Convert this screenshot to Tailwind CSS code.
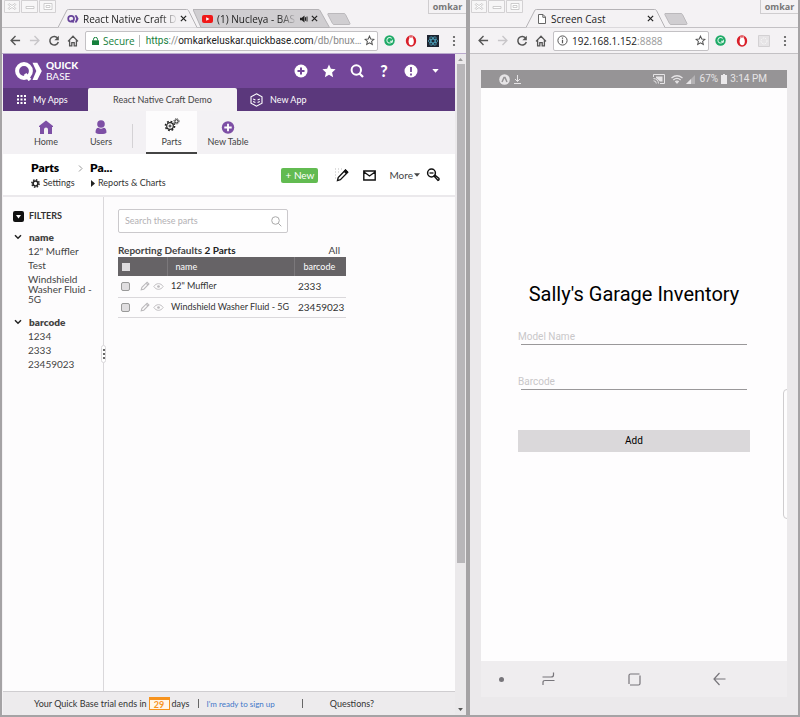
<!DOCTYPE html>
<html lang="en">
<head>
<meta charset="utf-8">
<meta name="viewport" content="width=device-width, initial-scale=1">
<title>React Native Craft Demo</title>
<script src="https://cdn.jsdelivr.net/npm/@tailwindcss/browser@4"></script>
</head>
<body class="bg-[#ecebec]">
<svg class="hidden" aria-hidden="true">
  <symbol id="back" viewBox="0 0 12 12"><path d="M11 6H1.500M6 1.200 1.200 6 6 10.800" fill="none" stroke="currentColor" stroke-width="1.500"/></symbol>
  <symbol id="forward" viewBox="0 0 12 12"><path d="M1 6h9.500M6 1.200 10.800 6 6 10.800" fill="none" stroke="currentColor" stroke-width="1.500"/></symbol>
  <symbol id="reload" viewBox="0 0 12 12"><path d="M9.800 3.400A4.300 4.300 0 1 0 10.300 7" fill="none" stroke="currentColor" stroke-width="1.500"/><path d="M10.800.8v4.400H6.400z" fill="currentColor"/></symbol>
  <symbol id="home" viewBox="0 0 12 12"><path d="M1 6.400 6 1.200l5 5.200M2.600 5.200v5.600h2.200V7.600h2.400v3.200h2.200V5.200" fill="none" stroke="currentColor" stroke-width="1.300"/></symbol>
  <symbol id="star" viewBox="0 0 12 12"><path d="m6 1.200 1.400 3.200 3.500.3-2.600 2.300.8 3.400L6 8.600l-3.100 1.800.8-3.400L1.100 4.700l3.500-.3z" fill="none" stroke="currentColor" stroke-width="1.100"/></symbol>
  <symbol id="close" viewBox="0 0 8 8"><path d="m1 1 6 6M7 1 1 7" stroke="currentColor" stroke-width="1.400"/></symbol>
  <symbol id="grammar" viewBox="0 0 12 12"><circle cx="6" cy="6" r="5.700" fill="#1faa67"/><path d="M8.400 3.800A3 3 0 1 0 9 6.800H6.500M9.200 5.200v3" fill="none" stroke="#d9f5e7" stroke-width="1.100"/></symbol>
  <symbol id="opera" viewBox="0 0 12 12"><ellipse cx="6" cy="6" rx="5.200" ry="5.700" fill="#d9202a"/><ellipse cx="6.200" cy="6.300" rx="2.600" ry="3.900" fill="#fff"/><path d="M4.500 1.500v2M6 .8v2M7.600 1.200v2" stroke="#fff" stroke-width=".6"/></symbol>
  <symbol id="dots" viewBox="0 0 4 12"><circle cx="2" cy="2" r="1.100" fill="currentColor"/><circle cx="2" cy="6" r="1.100" fill="currentColor"/><circle cx="2" cy="10" r="1.100" fill="currentColor"/></symbol>
  <symbol id="controls" viewBox="0 0 52 13"><g fill="#f7f6f7" stroke="#d3d1d3"><path d="M.5.5h15v12H.5zM17.500.5h16v12h-16zM35.500.5h16v12h-16z"/></g><g fill="#fff" stroke="#c3c1c3" stroke-width=".8"><path d="m5 3.500 3 2 3-2 1 1-2.500 2 2.500 2-1 1-3-2-3 2-1-1 2.500-2-2.500-2zM22 6.500h8v2h-8zM40 3.500h8v6h-8zM42 5.500h4v2h-4z"/></g></symbol>
  <symbol id="caret" viewBox="0 0 8 5"><path d="M0 0h8L4 4.800z" fill="currentColor"/></symbol>
  <symbol id="qb" viewBox="0 0 27 19"><circle cx="9" cy="9" r="6.900" fill="none" stroke="currentColor" stroke-width="4"/><path d="m10 12 5 6" stroke="currentColor" stroke-width="3.500"/><path d="M17.500.8h4.800L26.800 9l-4.500 9h-4.800l3.800-9z" fill="currentColor"/></symbol>
  <symbol id="pencil" viewBox="0 0 12 12"><path d="m1.500 10.500.8-3L8.500 1.400l2.200 2.200L4.500 9.800zM7.300 2.600l2.200 2.200" fill="none" stroke="currentColor" stroke-width="1.300"/></symbol>
  <symbol id="eye" viewBox="0 0 12 10"><path d="M.8 5C3.500.8 8.500.8 11.200 5 8.500 9.200 3.500 9.200.8 5z" fill="none" stroke="currentColor"/><circle cx="6" cy="5" r="1.500" fill="currentColor"/></symbol>
  <symbol id="chevron" viewBox="0 0 8 6"><path d="m1 1.200 3 3 3-3" fill="none" stroke="currentColor" stroke-width="1.500"/></symbol>
</svg>

<div class="grid min-h-screen grid-cols-[468fr_332fr] font-['Lato','Open_Sans',sans-serif] text-[10px] leading-3 text-[#444]">

  <!-- Quick Base window -->
  <section class="flex min-w-0 flex-col border-r-2 border-b-2 border-l-2 border-[#a5a3a5] bg-[#f4f2f4]" aria-label="Quick Base browser window">
    <div class="flex h-7 border-b border-[#c3c1c4] font-['Open_Sans','Noto_Sans',sans-serif] text-[10px] text-[#222]">
      <svg class="ml-[2px] h-[13px] w-[52px] shrink-0"><use href="#controls"/></svg>
      <div class="relative z-10 -mb-px mt-[9px] ml-[2px] flex h-[19px] w-[140px] shrink-0 items-center pl-[9px]">
        <svg class="absolute inset-0 -z-10 h-full w-full" viewBox="0 0 140 19" preserveAspectRatio="none"><path d="M0 18.500 9 1q.5-.5 1.500-.5h118q1.500 0 2 1l8.500 17" fill="#f4f2f4" stroke="#b5b3b6"/></svg>
        <svg class="h-2 w-3 text-[#67439a]"><use href="#qb"/></svg>
        <span class="ml-1 w-[95px] whitespace-nowrap [mask-image:linear-gradient(to_right,black_82%,transparent)]">React Native Craft D</span>
        <button class="ml-[2px]" aria-label="Close tab"><svg class="h-[7px] w-[7px]"><use href="#close"/></svg></button>
      </div>
      <div class="relative -mb-px mt-[9px] -ml-[5px] flex h-[19px] w-[138px] shrink-0 items-center pl-[9px]">
        <svg class="absolute inset-0 h-full w-full" viewBox="0 0 138 19" preserveAspectRatio="none"><path d="M0 .5h125q1.500 0 2 1l9.500 17H8z" fill="#d0ced1" stroke="#b5b3b6"/></svg>
        <svg class="relative h-2 w-[11px]" viewBox="0 0 11 8"><rect width="11" height="8" rx="2" fill="#f01818"/><path d="M4.200 2.200v3.600L7.500 4z" fill="#fff"/></svg>
        <span class="relative ml-[4px] w-[80px] whitespace-nowrap [mask-image:linear-gradient(to_right,black_78%,transparent)]">(1) Nucleya - BAS</span>
        <svg class="relative ml-[3px] h-2 w-2" viewBox="0 0 8 8"><path d="M0 2.700h1.800L4.500.5v7L1.800 5.300H0z" fill="#222"/><path d="M5.500 2.200v3.600M7 1.500v5" stroke="#222"/></svg>
        <button class="relative ml-[3px]" aria-label="Close tab"><svg class="h-[7px] w-[7px]"><use href="#close"/></svg></button>
      </div>
      <button class="mt-[13px] -ml-1 h-3 shrink-0" aria-label="New tab"><svg class="h-3 w-6" viewBox="0 0 24 12"><path d="M1 .5h16q1 0 1.500 1l4.500 9q.2 1-1 1H7q-1 0-1.500-1L.8 1.500z" fill="#d0ced1" stroke="#bbb9bc"/></svg></button>
      <span class="ml-auto flex h-[14px] w-[38px] shrink-0 items-center justify-center border-b border-l border-[#cfcdcf] text-[9px] leading-3 font-bold text-[#777]">omkar</span>
    </div>
    <div class="flex h-[26px] items-center border-b border-[#b9a9cc] pl-2 font-['Open_Sans','Noto_Sans',sans-serif] text-[#555]">
      <button aria-label="Back"><svg class="h-[11px] w-[11px]"><use href="#back"/></svg></button>
      <button class="ml-2 text-[#c8c6c9]" aria-label="Forward"><svg class="h-[11px] w-[11px]"><use href="#forward"/></svg></button>
      <button class="ml-2" aria-label="Reload"><svg class="h-3 w-3"><use href="#reload"/></svg></button>
      <button class="ml-[7px]" aria-label="Home page"><svg class="h-3 w-3"><use href="#home"/></svg></button>
      <div class="ml-[6px] flex h-5 min-w-0 flex-1 items-center rounded-xs border border-[#c3c1c4] bg-white pr-[2px] pl-[6px]">
        <svg class="h-2 w-[7px] shrink-0" viewBox="0 0 7 8"><path d="M0 3.300h7V8H0z" fill="#16803c"/><path d="M1.500 3.500V2.300a2 2 0 0 1 4 0v1.200" fill="none" stroke="#16803c"/></svg>
        <span class="ml-[4px] shrink-0 text-[#16803c]">Secure</span>
        <span class="mr-[6px] ml-1 h-3 w-px shrink-0 bg-[#bbb]"></span>
        <span class="flex-1 font-['Roboto',sans-serif] whitespace-nowrap text-[#888]"><span class="text-[#16803c]">https</span>://<span class="text-[#222]">omkarkeluskar.quickbase.com</span>/db/bnux…</span>
        <button class="shrink-0" aria-label="Bookmark"><svg class="h-[11px] w-[11px]"><use href="#star"/></svg></button>
      </div>
      <button class="ml-[6px] shrink-0" aria-label="Grammar checker"><svg class="h-[11px] w-[11px]"><use href="#grammar"/></svg></button>
      <button class="ml-[10px] shrink-0" aria-label="Ad blocker"><svg class="h-3 w-3"><use href="#opera"/></svg></button>
      <button class="ml-[10px] shrink-0" aria-label="React tools"><svg class="h-3 w-3" viewBox="0 0 12 12"><path d="M0 0h12v12H0z" fill="#1d2430"/><g fill="none" stroke="#4ea3bd" stroke-width=".8"><ellipse cx="6" cy="6" rx="4.800" ry="1.900"/><ellipse cx="6" cy="6" rx="4.800" ry="1.900" transform="rotate(60 6 6)"/><ellipse cx="6" cy="6" rx="4.800" ry="1.900" transform="rotate(120 6 6)"/></g></svg></button>
      <button class="mr-[10px] ml-[13px] shrink-0" aria-label="Menu"><svg class="h-3 w-1"><use href="#dots"/></svg></button>
    </div>

    <div class="flex flex-1">
      <div class="ml-px flex min-w-0 flex-1 flex-col bg-[#fdfcfd]">
        <header class="flex h-[34px] items-center bg-[#734699] pr-4 pl-3 text-white">
          <svg class="h-[19px] w-[27px]"><use href="#qb"/></svg>
          <div class="ml-1 flex flex-col text-[10px] leading-[11px]"><b class="font-black">QUICK</b><span>BASE</span></div>
          <div class="ml-auto flex items-center gap-[14px]">
            <button aria-label="Add"><svg class="h-[14px] w-[14px]" viewBox="0 0 14 14"><circle cx="7" cy="7" r="6.500" fill="#fff"/><path d="M7 3.500v7M3.500 7h7" stroke="#734699" stroke-width="2"/></svg></button>
            <button aria-label="Favorites"><svg class="h-[14px] w-[14px]" viewBox="0 0 14 14"><path d="m7 .5 1.900 4.300 4.700.5-3.500 3.200 1 4.700L7 10.800l-4.100 2.400 1-4.700L.4 5.300l4.700-.5z" fill="#fff"/></svg></button>
            <button aria-label="Search"><svg class="h-[14px] w-[14px]" viewBox="0 0 14 14"><circle cx="6.300" cy="6" r="4.700" fill="none" stroke="#fff" stroke-width="2"/><path d="m9.500 9.500 3.500 3.500" stroke="#fff" stroke-width="2.300"/></svg></button>
            <button class="w-[12px] text-center text-base leading-[14px] font-black" aria-label="Help">?</button>
            <button aria-label="Alerts"><svg class="h-[14px] w-[14px]" viewBox="0 0 14 14"><circle cx="7" cy="7" r="6.500" fill="#fff"/><path d="M7 3v5M7 9.500v2" stroke="#734699" stroke-width="1.800"/></svg></button>
            <button aria-label="Account"><svg class="h-[4px] w-[7px]"><use href="#caret"/></svg></button>
          </div>
        </header>
        <nav class="flex h-[23px] bg-[#5b387c] text-[9px] text-white" aria-label="Apps">
          <a href="#" class="flex w-[85px] items-center pl-[14px]"><svg class="mr-[7px] h-[9px] w-[9px]" viewBox="0 0 9 9"><path d="M1 0v9M4.500 0v9M8 0v9" stroke="#fff" stroke-width="2" stroke-dasharray="2 1.500"/></svg>My Apps</a>
          <a href="#" class="flex w-[149px] items-center justify-center rounded-t-xs bg-[#f4f2f4] text-[#444]">React Native Craft Demo</a>
          <a href="#" class="flex items-center pl-[13px]"><svg class="mr-[7px] h-[14px] w-[13px]" viewBox="0 0 13 14"><path d="m6.500.8 5.500 3v6.400l-5.500 3-5.500-3V3.800zM3.200 6l2.200 1M9.800 6 7.600 7M3.200 8.500l2.200 1M9.800 8.500l-2.200 1" fill="none" stroke="#fff" stroke-width="1.100"/></svg>New App</a>
        </nav>
        <nav class="flex h-[43px] bg-[#f3f1f4] pl-[15px] text-[9px] leading-3" aria-label="Tables">
          <a href="#" class="flex w-[56px] flex-col items-center pt-[9px]"><svg class="mb-[2px] h-[14px] w-[14px]" viewBox="0 0 14 14"><path d="M0 6 7 .5 14 6v1h-1v7H9V9.500a2 2 0 0 0-4 0V14H1V7H0z" fill="#7d4fa5"/></svg>Home</a>
          <a href="#" class="flex w-[54px] flex-col items-center pt-[9px]"><svg class="mb-[2px] h-[14px] w-[14px]" viewBox="0 0 14 14"><circle cx="7" cy="4" r="3.800" fill="#7d4fa5"/><path d="M1.500 12.500q0-4.500 3-4.700Q7 9.500 9.500 7.800q3 .2 3 4.700-1 1.500-5.500 1.500t-5.500-1.500z" fill="#7d4fa5"/></svg>Users</a>
          <span class="mt-[13px] ml-1 h-6 w-px bg-[#d4d2d5]"></span>
          <a href="#" class="ml-[13px] flex w-[51px] flex-col items-center border-b-2 border-[#444] bg-[#fdfcfd] pt-[7px]"><svg class="mb-1 h-[14px] w-4" viewBox="0 0 16 14"><g fill="none" stroke="#222"><circle cx="6" cy="8" r="3.300" stroke-width="1.200"/><circle cx="6" cy="8" r="4.600" stroke-width="1.500" stroke-dasharray="1.800 1.810"/><circle cx="6" cy="8" r="1"/><circle cx="12.500" cy="3.300" r="1.600"/><circle cx="12.500" cy="3.300" r="2.600" stroke-dasharray="1 1.040"/></g></svg>Parts</a>
          <a href="#" class="ml-1 flex w-[54px] flex-col items-center pt-[10px] whitespace-nowrap"><svg class="mb-[2px] h-[13px] w-[14px]" viewBox="0 0 14 14"><circle cx="7" cy="7" r="6.700" fill="#7d4fa5"/><path d="M7 3v8M3 7h8" stroke="#fff" stroke-width="2"/></svg>New Table</a>
        </nav>
        <div class="flex h-[43px] items-center border-b-2 border-[#ebe9ec] bg-white pt-px pr-[15px] pl-7">
          <div class="grid grid-cols-[59px_auto] gap-y-[2px] text-[9px] leading-3 text-[#333]">
            <h1 class="flex items-center justify-between text-xs leading-[14px] font-extrabold text-black">Parts<svg class="mr-[7px] h-[7px] w-[5px]" viewBox="0 0 5 7"><path d="m1 .5 3 3-3 3" fill="none" stroke="#999"/></svg></h1>
            <h2 class="text-xs leading-[14px] font-extrabold text-black">Pa...</h2>
            <a href="#" class="flex items-center"><svg class="mr-[3px] h-[9px] w-[9px]" viewBox="0 0 9 9"><circle cx="4.500" cy="4.500" r="2.500" fill="none" stroke="#222" stroke-width="1.700"/><circle cx="4.500" cy="4.500" r="3.700" fill="none" stroke="#222" stroke-width="1.400" stroke-dasharray="1.500 1.400"/></svg>Settings</a>
            <a href="#" class="flex items-center"><svg class="mr-[3px] ml-px h-[7px] w-1" viewBox="0 0 4 7"><path d="M0 0v7l4-3.500z" fill="#222"/></svg>Reports &amp; Charts</a>
          </div>
          <button class="ml-auto h-[15px] w-[37px] rounded-xs bg-[#62bb51] text-white">+ New</button>
          <button class="ml-4" aria-label="Edit"><svg class="h-[14px] w-[15px] text-black" viewBox="0 0 15 14"><path d="M1 1h7M1 4h5M1 7h3M1 10h2" stroke="#bbb" stroke-dasharray="1 2"/><path d="m3.500 12.500.7-3L11.500 2l2.200 2.200-7.300 7.400z" fill="#fff" stroke="#111" stroke-width="1.300"/><path d="m9.500 3.500 2-2.200 2.800 2.600-2.100 2.300z" fill="#111"/></svg></button>
          <button class="ml-[14px]" aria-label="Email"><svg class="h-[11px] w-[13px]" viewBox="0 0 13 11"><path d="M.8 1h11.400v9H.8zM1 2l5.500 4L12 2" fill="none" stroke="#111" stroke-width="1.400"/></svg></button>
          <button class="ml-[13px] flex items-center">More<svg class="ml-px h-1 w-[6px]"><use href="#caret"/></svg></button>
          <button class="ml-[6px]" aria-label="Search tools"><svg class="h-[14px] w-[14px]" viewBox="0 0 14 14"><circle cx="5.500" cy="5" r="3.900" fill="none" stroke="#111" stroke-width="1.500"/><path d="M3.500 5h4" stroke="#111" stroke-width="1.300"/><path d="m8 8 1-.8 4 3.300q.5 1.500-1 2z" fill="#fff" stroke="#111" stroke-width="1.300"/></svg></button>
        </div>

        <div class="flex flex-1">
          <aside class="relative w-[101px] shrink-0 border-r border-[#dad8db] pt-[13px] pl-[10px]">
            <div class="flex items-center text-[9px] font-bold text-[#333]"><svg class="mr-[5px] h-[11px] w-[11px]" viewBox="0 0 11 11"><rect width="11" height="11" rx="2" fill="#111"/><path d="M3 4h5L5.500 7.500z" fill="#fff"/></svg>FILTERS</div>
            <h3 class="mt-[9px] flex items-center gap-[7px] pl-px text-[10px] leading-3 font-extrabold"><svg class="h-[6px] w-2 text-[#222]"><use href="#chevron"/></svg>name</h3>
            <ul class="ml-[15px] flex flex-col gap-1 pt-[3px] pr-2 leading-[10px]"><li>12" Muffler</li><li>Test</li><li>Windshield Washer Fluid - 5G</li></ul>
            <h3 class="mt-[12px] flex items-center gap-[7px] pl-px text-[10px] leading-3 font-extrabold"><svg class="h-[6px] w-2 text-[#222]"><use href="#chevron"/></svg>barcode</h3>
            <ul class="ml-[15px] flex flex-col gap-1 pt-[3px] leading-[10px]"><li>1234</li><li>2333</li><li>23459023</li></ul>
            <div class="absolute top-[148px] -right-[3px] flex h-[18px] w-[5px] items-center justify-center rounded-full border border-[#dad8db] bg-white text-[#444]"><svg class="h-3 w-1 shrink-0"><use href="#dots"/></svg></div>
          </aside>
          <main class="min-w-0 flex-1 pt-3 pl-[14px]">
            <div class="flex h-[24px] w-[170px] items-center rounded-xs border border-[#cbc9cc] bg-white pr-[5px] pl-[6px]">
              <input type="search" aria-label="Search these parts" placeholder="Search these parts" class="min-w-0 flex-1 text-[9px] placeholder:text-[#b3b1b4] focus:outline-none">
              <svg class="h-[11px] w-[11px]" viewBox="0 0 11 11"><circle cx="4.500" cy="4.500" r="3.800" fill="none" stroke="#aaa"/><path d="m7.300 7.300 3 3" stroke="#aaa"/></svg>
            </div>
            <div class="w-[228px]">
              <div class="mt-[10px] flex h-[14px] items-center justify-between pr-[6px]"><b class="font-bold">Reporting Defaults <span class="text-[#222]">2 Parts</span></b><span>All</span></div>
              <table class="w-full table-fixed border-collapse text-left text-[9px] text-[#333]">
                <thead><tr class="h-[19px] bg-[#666366] text-white">
                  <th class="w-[49px] border-r border-[#7b787b] pl-1"><input type="checkbox" aria-label="Select all" class="block h-2 w-2 appearance-none bg-[#dedcde]"></th>
                  <th class="w-[127px] border-r border-[#7b787b] pl-2 font-normal">name</th>
                  <th class="pl-[9px] font-normal">barcode</th></tr></thead>
                <tbody>
                  <tr class="h-[21px] border-b border-[#dad8db]"><td><div class="flex items-center pl-[3px] text-[#bbb9bc]"><input type="checkbox" aria-label="Select 12&quot; Muffler" class="h-[9px] w-[9px] appearance-none rounded-xs border border-[#999] bg-[#e0dee0]"><svg class="ml-[10px] h-[10px] w-[10px]"><use href="#pencil"/></svg><svg class="ml-[3px] h-[9px] w-[11px]"><use href="#eye"/></svg></div></td><td class="pl-1">12" Muffler</td><td class="pl-1 text-[10px]">2333</td></tr>
                  <tr class="h-[20px] border-b border-[#dad8db]"><td><div class="flex items-center pl-[3px] text-[#bbb9bc]"><input type="checkbox" aria-label="Select Windshield Washer Fluid" class="h-[9px] w-[9px] appearance-none rounded-xs border border-[#999] bg-[#e0dee0]"><svg class="ml-[10px] h-[10px] w-[10px]"><use href="#pencil"/></svg><svg class="ml-[3px] h-[9px] w-[11px]"><use href="#eye"/></svg></div></td><td class="pl-1 whitespace-nowrap">Windshield Washer Fluid - 5G</td><td class="pl-1 text-[10px]">23459023</td></tr>
                </tbody>
              </table>
            </div>
          </main>
        </div>
        <footer class="flex h-6 items-center border-t border-[#cfcdd0] bg-[#edebed] pl-[31px] text-[9px] whitespace-nowrap text-[#333]">
          Your Quick Base trial ends in<span class="mx-[2px] h-[13px] w-[21px] border border-t-3 border-[#f7931e] bg-[#fff6ea] text-center leading-[9px] font-bold text-[#f7931e]">29</span>days
          <span class="ml-[9px] h-[9px] w-px bg-[#666]"></span><a href="#" class="ml-[7px] text-[8px] text-[#3f77c9]">I'm ready to sign up</a><span class="ml-[27px] h-[9px] w-px bg-[#666]"></span><a href="#" class="ml-[27px]">Questions?</a>
        </footer>
      </div>
      <div class="flex w-[11px] flex-col items-center bg-[#ebe9eb] pt-[4px] pb-[4px] text-[#555]" aria-hidden="true">
        <svg class="h-[3px] w-[5px] shrink-0 rotate-180 text-[#999]"><use href="#caret"/></svg>
        <div class="mt-[3px] w-[8px] flex-[496] bg-[#b8b6b9]"></div><div class="flex-[144]"></div>
        <svg class="h-[3px] w-[5px] shrink-0"><use href="#caret"/></svg>
      </div>
    </div>
  </section>

  <!-- Screen Cast window -->
  <section class="flex min-w-0 flex-col border-r-2 border-b-2 border-l-2 border-[#a5a3a5] bg-[#f4f2f4]" aria-label="Screen Cast browser window">
    <div class="flex h-7 border-b border-[#c3c1c4] font-['Open_Sans','Noto_Sans',sans-serif] text-[10px] text-[#222]">
      <svg class="ml-px h-[13px] w-[52px] shrink-0"><use href="#controls"/></svg>
      <div class="relative z-10 -mb-px mt-[9px] ml-[3px] flex h-[19px] w-[140px] shrink-0 items-center pl-3">
        <svg class="absolute inset-0 -z-10 h-full w-full" viewBox="0 0 140 19" preserveAspectRatio="none"><path d="M0 18.500 9 1q.5-.5 1.500-.5h118q1.500 0 2 1l8.500 17" fill="#f4f2f4" stroke="#b5b3b6"/></svg>
        <svg class="h-[10px] w-2" viewBox="0 0 8 10"><path d="M.5.5H5l2.500 2.500v6.500h-7zM4.800.5V3.300h2.700" fill="#fff" stroke="#666"/></svg>
        <span class="ml-[5px]">Screen Cast</span>
        <button class="mr-[12px] ml-auto" aria-label="Close tab"><svg class="h-[7px] w-[7px]"><use href="#close"/></svg></button>
      </div>
      <button class="mt-[13px] -ml-[2px] h-3 shrink-0" aria-label="New tab"><svg class="h-3 w-6" viewBox="0 0 24 12"><path d="M1 .5h16q1 0 1.500 1l4.500 9q.2 1-1 1H7q-1 0-1.500-1L.8 1.500z" fill="#d0ced1" stroke="#bbb9bc"/></svg></button>
      <span class="ml-auto flex h-[14px] w-[38px] shrink-0 items-center justify-center border-b border-l border-[#cfcdcf] text-[9px] leading-3 font-bold text-[#777]">omkar</span>
    </div>
    <div class="flex h-[26px] items-center border-b border-[#c3c1c4] pl-2 font-['Open_Sans','Noto_Sans',sans-serif] text-[#555]">
      <button aria-label="Back"><svg class="h-[11px] w-[11px]"><use href="#back"/></svg></button>
      <button class="ml-2 text-[#c8c6c9]" aria-label="Forward"><svg class="h-[11px] w-[11px]"><use href="#forward"/></svg></button>
      <button class="ml-2" aria-label="Reload"><svg class="h-3 w-3"><use href="#reload"/></svg></button>
      <button class="ml-[7px]" aria-label="Home page"><svg class="h-3 w-3"><use href="#home"/></svg></button>
      <div class="ml-[6px] flex h-5 min-w-0 flex-1 items-center rounded-xs border border-[#c3c1c4] bg-white pr-[2px] pl-[3px]">
        <svg class="h-[11px] w-[11px]" viewBox="0 0 11 11"><circle cx="5.500" cy="5.500" r="4.600" fill="none" stroke="#555"/><path d="M5.500 4.800v3.400M5.500 2.600v1.200" stroke="#555" stroke-width="1.200"/></svg>
        <span class="ml-1 flex-1 text-[#999]"><span class="text-[#222]">192.168.1.152</span>:8888</span>
        <button aria-label="Bookmark"><svg class="h-[11px] w-[11px]"><use href="#star"/></svg></button>
      </div>
      <button class="ml-[6px]" aria-label="Grammar checker"><svg class="h-[11px] w-[11px]"><use href="#grammar"/></svg></button>
      <button class="ml-[10px]" aria-label="Ad blocker"><svg class="h-3 w-3"><use href="#opera"/></svg></button>
      <button class="ml-[10px]" aria-label="React tools"><svg class="h-3 w-3" viewBox="0 0 12 12"><path d="M.5.5h11v11H.5z" fill="#e6e4e6" stroke="#d3d1d3"/><circle cx="6" cy="6" r="3" fill="none" stroke="#fafafa" stroke-dasharray="1.500 1"/></svg></button>
      <button class="mr-[11px] ml-[13px]" aria-label="Menu"><svg class="h-3 w-1"><use href="#dots"/></svg></button>
    </div>
    <div class="flex flex-1 flex-col bg-[#ebe9eb] px-[11px] pt-4 pb-[18px] font-['Roboto',sans-serif]">
      <div class="flex h-[18px] items-center bg-[#969496] pr-5 pl-[18px] text-[#e6e4e6]">
        <svg class="h-[11px] w-[11px]" viewBox="0 0 11 11"><circle cx="5.500" cy="5.500" r="5.300" fill="#e6e4e6"/><path d="m3 8 2-4.500h1L8 8" fill="none" stroke="#969496" stroke-width="1.500"/></svg>
        <svg class="ml-[4px] h-[9px] w-[7px]" viewBox="0 0 7 9"><path d="M3.500 0v6.500M1 4l2.500 2.500L6 4M0 8.500h7" fill="none" stroke="currentColor"/></svg>
        <svg class="mr-[6px] ml-auto h-[10px] w-3" viewBox="0 0 12 10"><path d="M.5 3V.5h11v9H7" fill="none" stroke="currentColor"/><path d="M3 2.500h6.500v5H7L3 4z" fill="currentColor"/><path d="M.5 4.500a5 5 0 0 1 5 5M.5 6.800a2.800 2.800 0 0 1 2.800 2.700" fill="none" stroke="currentColor"/></svg>
        <svg class="mr-[3px] h-[9px] w-3" viewBox="0 0 12 9"><path d="M.5 3Q6-1.500 11.500 3M2.300 5Q6 1.800 9.700 5M4.200 6.800q1.800-1.500 3.600 0" fill="none" stroke="currentColor" stroke-width="1.300"/><path d="m4.500 7 1.500 2 1.500-2z" fill="currentColor"/></svg>
        <svg class="mr-[5px] h-[9px] w-[9px]" viewBox="0 0 9 9"><path d="M9 0v9H0z" fill="#b4b2b4"/><path d="M5 4v5H0z" fill="currentColor"/></svg>
        67%<svg class="mx-[3px] h-[10px] w-[6px]" viewBox="0 0 6 10"><path d="M2 0h2v1h2v9H0V1h2z" fill="#ebe9eb"/></svg>3:14 PM
      </div>
      <div class="relative flex flex-1 flex-col overflow-hidden bg-[#fefdfe] px-[37px] text-black">
        <h1 class="pt-[194px] text-center text-xl leading-6 whitespace-nowrap">Sally's Garage Inventory</h1>
        <input aria-label="Model Name" placeholder="Model Name" class="mt-[22px] h-4 placeholder:text-[#c9c7c9] focus:outline-none">
        <div class="mx-[3px] h-px bg-[#9a989a]"></div>
        <input aria-label="Barcode" placeholder="Barcode" class="mt-[28px] h-4 placeholder:text-[#c9c7c9] focus:outline-none">
        <div class="mx-[3px] h-px bg-[#9a989a]"></div>
        <button class="mt-10 h-[22px] bg-[#dad8da]">Add</button>
        <div class="absolute top-[301px] -right-1 h-[130px] w-2 rounded-sm border border-[#cfcdcf]"></div>
      </div>
      <div class="flex h-9 items-center bg-[#efedef] text-[#77757a]">
        <span class="ml-[18px] h-[5px] w-[5px] rounded-full bg-current"></span>
        <button class="ml-[38px]" aria-label="Recent apps"><svg class="h-[14px] w-[13px]" viewBox="0 0 13 14"><path d="M.5 5H9q2.500 0 2.500-2V.5M12.500 8.500H3q-2 0-2 2V13" fill="none" stroke="currentColor" stroke-width="1.200"/></svg></button>
        <button class="ml-[73px]" aria-label="Home"><svg class="h-[13px] w-[13px]" viewBox="0 0 13 13"><path d="M1 11V2.500Q1 1 2.500 1h9M12 2.500v8q0 1.500-1.500 1.500H2" fill="none" stroke="currentColor" stroke-width="1.200"/></svg></button>
        <button class="ml-[72px]" aria-label="Back"><svg class="h-[14px] w-[13px]" viewBox="0 0 13 14"><path d="M12.500 7H1M6.500 1 1 7l5.500 6" fill="none" stroke="currentColor" stroke-width="1.200"/></svg></button>
      </div>
    </div>
  </section>
</div>
</body>
</html>
